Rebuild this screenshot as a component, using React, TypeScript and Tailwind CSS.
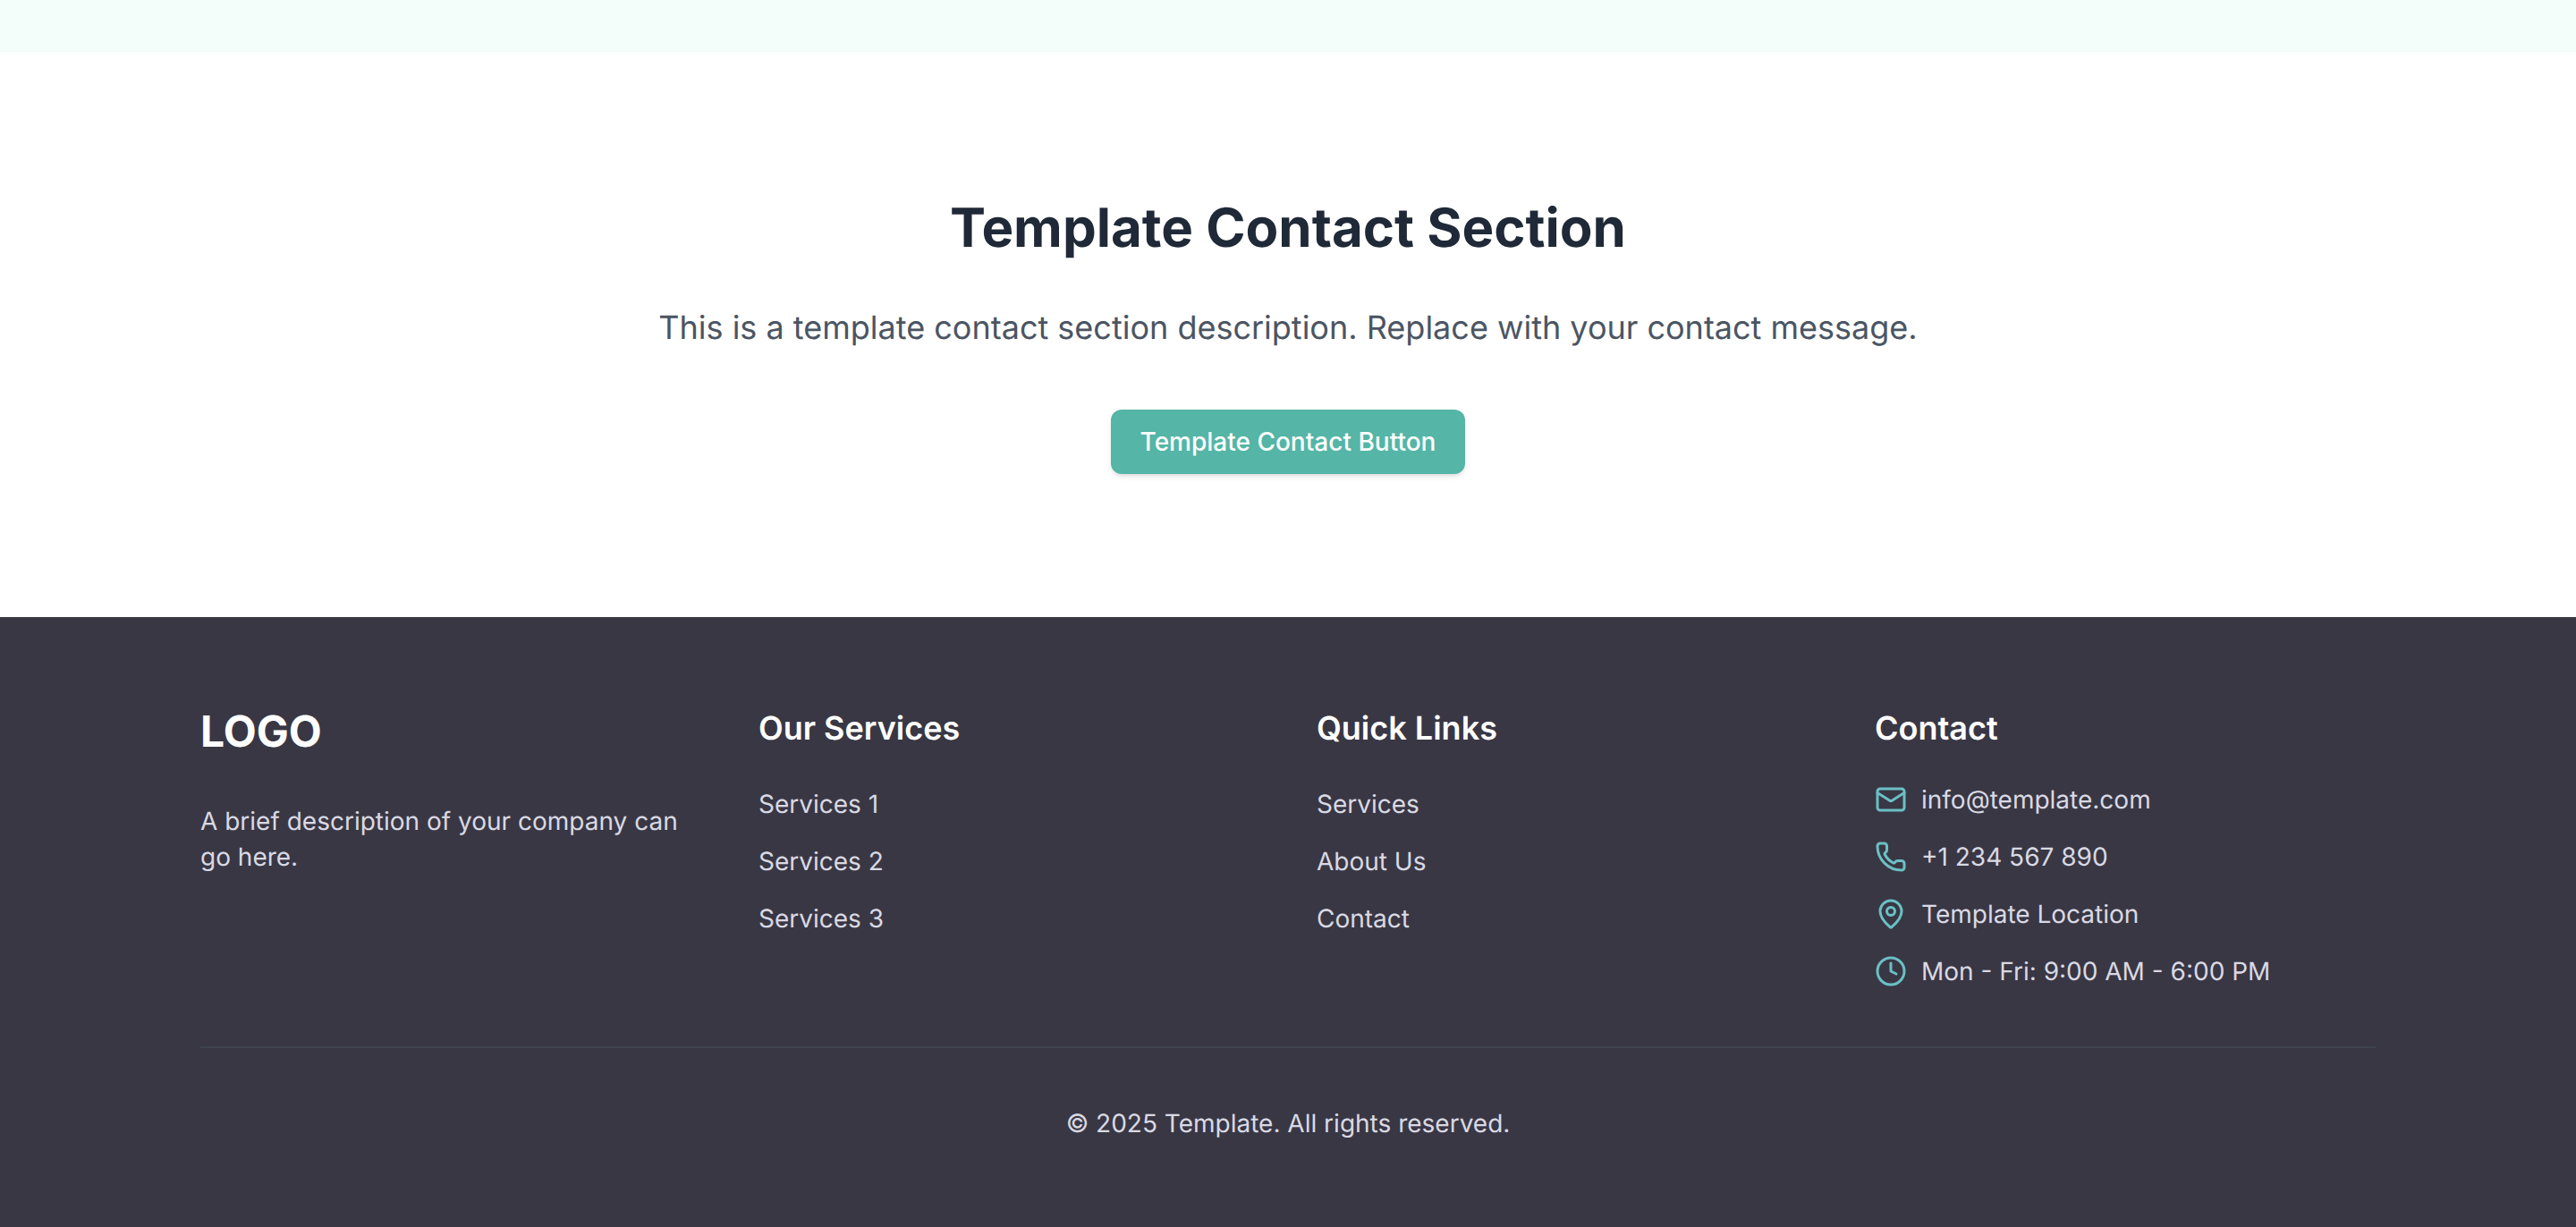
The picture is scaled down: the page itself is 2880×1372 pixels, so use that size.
import { Clock, Mail, MapPin, Phone } from "lucide-react";

const services = ["Services 1", "Services 2", "Services 3"];
const quickLinks = ["Services", "About Us", "Contact"];

const contacts = [
  { icon: Mail, label: "info@template.com" },
  { icon: Phone, label: "+1 234 567 890" },
  { icon: MapPin, label: "Template Location" },
  { icon: Clock, label: "Mon - Fri: 9:00 AM - 6:00 PM" },
];

function LinkColumn({ title, items }: { title: string; items: string[] }) {
  return (
    <div>
      <h3 className="mb-8 text-[36px] leading-[56px] font-semibold text-white">{title}</h3>
      <ul className="space-y-4 text-[32px] leading-[48px]">
        {items.map((item) => (
          <li key={item}>
            <a href="#" className="text-[28px] leading-[40px] text-[#d9d9e3]">
              {item}
            </a>
          </li>
        ))}
      </ul>
    </div>
  );
}

export default function App() {
  return (
    <div className="min-h-screen bg-white font-['Inter',sans-serif] [text-rendering:geometricPrecision]">
      <div className="h-[58px] bg-[#f3fdfa]" />

      <section className="flex flex-col items-center py-40">
        <h2 className="mt-px mb-[47px] text-[60px] leading-[72px] font-bold text-[#1f2937]">
          Template Contact Section
        </h2>
        <p className="mb-16 text-[36px] leading-[56px] text-[#4b5563]">
          This is a template contact section description. Replace with your contact message.
        </p>
        <button className="rounded-xl bg-[#55b5a6] px-[33px] py-4 text-[28px] leading-[40px] font-medium text-white shadow-md">
          Template Contact Button
        </button>
      </section>

      <footer className="bg-[#393744] px-56 pt-24 pb-24">
        <div className="grid grid-cols-4 gap-16">
          <div>
            <div className="mb-12 text-[48px] leading-[64px] font-bold text-white">LOGO</div>
            <p className="text-[28px] leading-[40px] text-[#d9d9e3]">
              A brief description of your company can go here.
            </p>
          </div>

          <LinkColumn title="Our Services" items={services} />
          <LinkColumn title="Quick Links" items={quickLinks} />

          <div>
            <h3 className="mb-8 text-[36px] leading-[56px] font-semibold text-white">Contact</h3>
            <ul className="space-y-6">
              {contacts.map(({ icon: Icon, label }) => (
                <li key={label} className="flex items-center gap-4 text-[28px] leading-[40px] text-[#d9d9e3]">
                  <Icon size={36} strokeWidth={2} className="shrink-0 text-[#6bc0c4]" />
                  <span>{label}</span>
                </li>
              ))}
            </ul>
          </div>
        </div>

        <div className="mt-16 border-t-2 border-[#3f4350] pt-16 text-center text-[28px] leading-[40px] text-[#d9d9e3]">
          © 2025 Template. All rights reserved.
        </div>
      </footer>
    </div>
  );
}
